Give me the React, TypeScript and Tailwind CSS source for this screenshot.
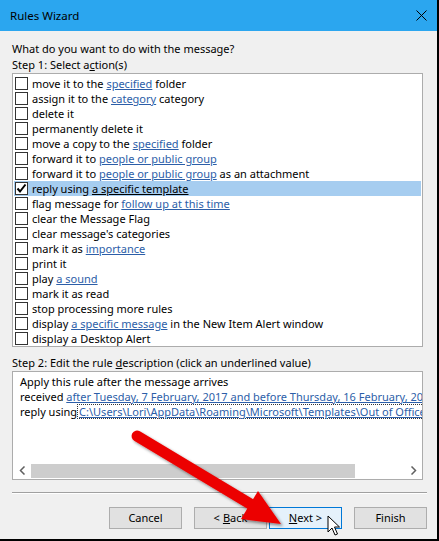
import React from 'react';

type Seg = { t: string; link?: boolean };

const rows: { segs: Seg[]; checked?: boolean }[] = [
  { segs: [{ t: 'move it to the ' }, { t: 'specified', link: true }, { t: ' folder' }] },
  { segs: [{ t: 'assign it to the ' }, { t: 'category', link: true }, { t: ' category' }] },
  { segs: [{ t: 'delete it' }] },
  { segs: [{ t: 'permanently delete it' }] },
  { segs: [{ t: 'move a copy to the ' }, { t: 'specified', link: true }, { t: ' folder' }] },
  { segs: [{ t: 'forward it to ' }, { t: 'people or public group', link: true }] },
  { segs: [{ t: 'forward it to ' }, { t: 'people or public group', link: true }, { t: ' as an attachment' }] },
  { segs: [{ t: 'reply using ' }, { t: 'a specific template', link: true }], checked: true },
  { segs: [{ t: 'flag message for ' }, { t: 'follow up at this time', link: true }] },
  { segs: [{ t: 'clear the Message Flag' }] },
  { segs: [{ t: "clear message's categories" }] },
  { segs: [{ t: 'mark it as ' }, { t: 'importance', link: true }] },
  { segs: [{ t: 'print it' }] },
  { segs: [{ t: 'play ' }, { t: 'a sound', link: true }] },
  { segs: [{ t: 'mark it as read' }] },
  { segs: [{ t: 'stop processing more rules' }] },
  { segs: [{ t: 'display ' }, { t: 'a specific message', link: true }, { t: ' in the New Item Alert window' }] },
  { segs: [{ t: 'display a Desktop Alert' }] },
];

const Checkbox = ({ checked }: { checked?: boolean }) => (
  <div className="w-[13px] h-[13px] border border-[#333] bg-white flex items-center justify-center shrink-0">
    {checked && (
      <svg width="11" height="11" viewBox="0 0 11 11">
        <path d="M1.5 5.5 L4 8.5 L9.5 1.5" fill="none" stroke="#000" strokeWidth="2" />
      </svg>
    )}
  </div>
);

const Button = ({ children, focused }: { children: React.ReactNode; focused?: boolean }) => (
  <div
    className={
      focused
        ? 'w-[73px] h-[22px] flex items-center justify-center border border-[#0078d7] bg-[#e5f1fb]'
        : 'w-[73px] h-[22px] flex items-center justify-center border border-[#adadad] bg-[#e1e1e1]'
    }
  >
    {children}
  </div>
);

export default function App() {
  return (
    <div
      className="relative w-[439px] h-[541px] bg-[#f0f0f0] border-r-2 border-b-2 border-black text-[11px] text-black overflow-hidden"
      style={{ fontFamily: '"Noto Sans", "Open Sans", sans-serif' }}
    >
      {/* title bar */}
      <div className="h-[31px] bg-[#2ba6ef] flex items-center justify-between pl-[10px] pr-[10px]">
        <span className="text-[11.5px]">Rules Wizard</span>
        <svg width="11" height="11" viewBox="0 0 11 11">
          <path d="M0.5 0.5 L10.5 10.5 M10.5 0.5 L0.5 10.5" stroke="#000" strokeWidth="1" />
        </svg>
      </div>

      <div className="pl-[12px] pt-[10px]">
        <div className="h-[15px] leading-[15px]">What do you want to do with the message?</div>
        <div className="h-[15px] leading-[15px] mt-[1px]">
          Step 1: Select a<span className="underline">c</span>tion(s)
        </div>

        {/* action list */}
        <div className="mt-[1px] w-[411px] h-[274px] border border-[#acacac] bg-white pt-[2px]">
          {rows.map((r, i) => (
            <div
              key={i}
              className={
                r.checked
                  ? 'h-[15px] leading-[15px] flex items-center gap-[4px] pl-[1px] mx-[1px] bg-[#a6cdf0] whitespace-nowrap'
                  : 'h-[15px] leading-[15px] flex items-center gap-[4px] pl-[1px] mx-[1px] whitespace-nowrap'
              }
            >
              <Checkbox checked={r.checked} />
              <span>
                {r.segs.map((s, j) =>
                  s.link ? (
                    <span key={j} className={r.checked ? 'underline' : 'underline text-[#2c5ea8]'}>
                      {s.t}
                    </span>
                  ) : (
                    <span key={j}>{s.t}</span>
                  )
                )}
              </span>
            </div>
          ))}
        </div>

        <div className="h-[15px] leading-[15px] mt-[8px]">
          Step 2: Edit the rule <span className="underline">d</span>escription (click an underlined value)
        </div>

        {/* description box */}
        <div className="mt-[1px] w-[411px] h-[109px] border border-[#acacac] bg-white flex flex-col">
          <div className="flex-1 overflow-hidden pt-[2px] pl-[7px] whitespace-nowrap">
            <div className="h-[15px] leading-[15px]">Apply this rule after the message arrives</div>
            <div className="h-[15px] leading-[15px]">
              received{' '}
              <span className="underline text-[#2c5ea8]">
                after Tuesday, 7 February, 2017 and before Thursday, 16 February, 2017
              </span>
            </div>
            <div className="h-[15px] leading-[15px] flex">
              <span>reply using</span>
              <span className="underline text-[#2c5ea8] border border-dotted border-[#333] leading-[13px] pl-[1px]">
                C:\Users\Lori\AppData\Roaming\Microsoft\Templates\Out of Office.oft
              </span>
            </div>
          </div>
          {/* horizontal scrollbar */}
          <div className="h-[17px] flex items-center bg-white">
            <div className="w-[18px] flex items-center justify-center">
              <svg width="7" height="9" viewBox="0 0 7 9">
                <path d="M5.5 0.5 L1.5 4.5 L5.5 8.5" fill="none" stroke="#606060" strokeWidth="1.5" />
              </svg>
            </div>
            <div className="w-[324px] h-[14px] bg-[#cdcdcd]" />
            <div className="flex-1" />
            <div className="w-[18px] flex items-center justify-center">
              <svg width="7" height="9" viewBox="0 0 7 9">
                <path d="M1.5 0.5 L5.5 4.5 L1.5 8.5" fill="none" stroke="#606060" strokeWidth="1.5" />
              </svg>
            </div>
          </div>
        </div>

        <div className="mt-[12px] w-[415px] h-[2px] border-t border-[#a0a0a0] border-b border-b-white" />

        <div className="mt-[13px] w-[415px] flex justify-end">
          <Button>Cancel</Button>
          <div className="w-[12px]" />
          <Button>
            &lt; <span className="underline ml-[3px]">B</span>ack
          </Button>
          <div className="w-[2px]" />
          <Button focused>
            <span className="underline">N</span>ext &gt;
          </Button>
          <div className="w-[12px]" />
          <Button>Finish</Button>
        </div>
      </div>

      {/* red arrow annotation */}
      <svg className="absolute left-0 top-0 pointer-events-none" width="439" height="541" viewBox="0 0 439 541">
        <defs>
          <filter id="sh" x="-20%" y="-20%" width="140%" height="140%">
            <feDropShadow dx="2" dy="2" stdDeviation="1.5" floodColor="#000" floodOpacity="0.45" />
          </filter>
        </defs>
        <g filter="url(#sh)">
          <line x1="137" y1="436" x2="252" y2="505" stroke="#ec0000" strokeWidth="11" strokeLinecap="round" />
          <polygon points="258,491 281,524 241,519" fill="#ec0000" />
        </g>
      </svg>

      {/* mouse cursor */}
      <svg className="absolute left-[327px] top-[515px] pointer-events-none" width="14" height="21" viewBox="0 0 14 21">
        <path
          d="M1 1 L1 17 L5 13 L8 20 L10.5 19 L7.5 12 L12.5 12 Z"
          fill="#fff"
          stroke="#000"
          strokeWidth="1"
          strokeLinejoin="miter"
        />
      </svg>
    </div>
  );
}
